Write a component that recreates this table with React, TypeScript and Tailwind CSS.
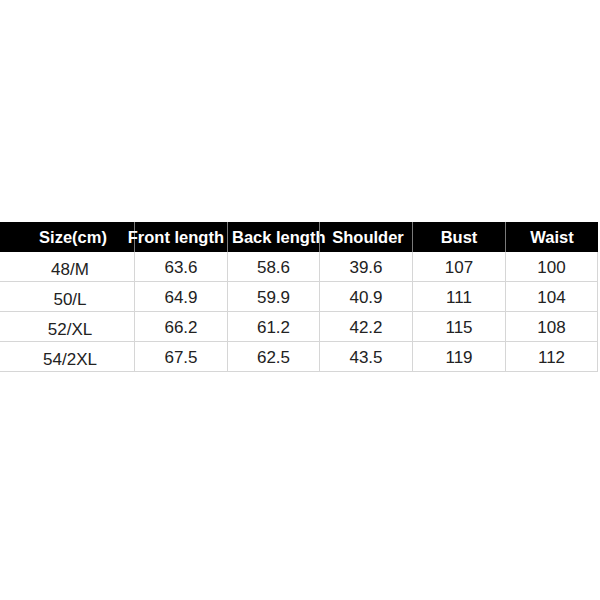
import React from "react";

const headers = ["Size(cm)", "Front length", "Back length", "Shoulder", "Bust", "Waist"];
const rows = [
  ["48/M", "63.6", "58.6", "39.6", "107", "100"],
  ["50/L", "64.9", "59.9", "40.9", "111", "104"],
  ["52/XL", "66.2", "61.2", "42.2", "115", "108"],
  ["54/2XL", "67.5", "62.5", "43.5", "119", "112"],
];

const headerAlign = [
  "justify-center pl-[12px]",
  "justify-end pr-[3px]",
  "justify-start pl-[4px]",
  "justify-center pl-[4px]",
  "justify-center",
  "justify-center",
];

export default function App() {
  return (
    <div className="w-[600px] h-[600px] bg-white pt-[222px]" style={{ fontFamily: '"Liberation Sans", Arial, sans-serif' }}>
      <div className="w-[598px]">
        <div className="grid grid-cols-[134px_93px_92px_93px_93px_93px] h-[30px] bg-black">
          {headers.map((h, i) => (
            <div
              key={h}
              className={`flex items-center whitespace-nowrap text-white font-bold text-[16.5px] leading-none ${headerAlign[i]} ${i > 0 ? "border-l border-[#7a7a7a]" : ""}`}
            >
              {h}
            </div>
          ))}
        </div>
        {rows.map((r, ri) => (
          <div key={ri} className="grid grid-cols-[134px_93px_92px_93px_93px_93px] h-[30px] border-b border-[#d6d6d6]">
            {r.map((c, ci) => (
              <div
                key={ci}
                className={`flex items-center justify-center text-[17px] leading-none text-[#222] ${ci > 0 ? "border-l border-[#d6d6d6]" : ""} ${ci === 5 ? "border-r" : ""} ${ci === 0 ? "pt-[5px] pl-[6px]" : "pt-[1px]"}`}
              >
                {c}
              </div>
            ))}
          </div>
        ))}
      </div>
    </div>
  );
}
